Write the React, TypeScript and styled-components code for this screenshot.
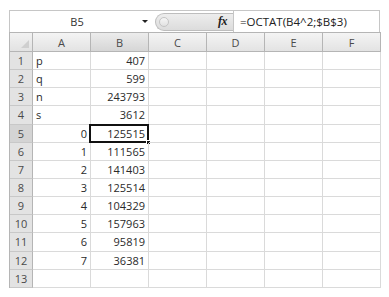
import React from "react";
import styled, { createGlobalStyle } from "styled-components";

//== Styling ==//
const GlobalStyle = createGlobalStyle`
  body {
    margin: 0;
    background: #ffffff;
    font-family: "Open Sans", "Liberation Sans", sans-serif;
  }
`;

const Sheet = styled.div`
  padding: 10px 0 0 9px;
  width: 371px;
`;

const FormulaBar = styled.div`
  display: flex;
  align-items: center;
  height: 22px;
  border-top: 1px solid #c6c6c6;
  border-left: 1px solid #c6c6c6;
  box-sizing: border-box;
`;

const NameBox = styled.div`
  display: flex;
  align-items: center;
  width: 143px;
  height: 100%;
  background: #fff;
  color: #333;
  font-size: 11px;
`;

const NameText = styled.span`
  flex: 1;
  text-align: center;
  padding-left: 2px;
`;

const DropArrow = styled.span`
  width: 0;
  height: 0;
  margin-right: 5px;
  border-left: 3px solid transparent;
  border-right: 3px solid transparent;
  border-top: 3px solid #222;
`;

const ButtonPill = styled.div`
  display: flex;
  align-items: center;
  justify-content: space-between;
  margin-left: 2px;
  width: 78px;
  height: 18px;
  box-sizing: border-box;
  border: 1px solid #bdbdbd;
  border-right: none;
  border-radius: 9px 0 0 9px;
  background: linear-gradient(#ededed, #dcdcdc);
  padding: 0 6px 0 3px;
`;

const PillDot = styled.span`
  width: 10px;
  height: 10px;
  border-radius: 50%;
  border: 1px solid #c4c4c4;
  box-sizing: border-box;
  background: linear-gradient(#f6f6f6, #e2e2e2);
`;

const Fx = styled.span`
  font-family: "Liberation Serif", serif;
  font-style: italic;
  font-weight: bold;
  font-size: 12px;
  color: #222;
  letter-spacing: -0.5px;
`;

const FormulaInput = styled.div`
  flex: 1;
  height: 100%;
  display: flex;
  align-items: center;
  border-left: 1px solid #c6c6c6;
  border-right: 1px solid #c6c6c6;
  background: #fff;
  padding-left: 6px;
  font-size: 11.5px;
  color: #222;
`;

const Grid = styled.div`
  display: grid;
  grid-template-columns: 23px repeat(6, 58px);
  grid-template-rows: 20px;
  grid-auto-rows: 18.15px;
  border-left: 1px solid #b5b5b5;
  box-sizing: border-box;
`;

const Corner = styled.div`
  position: relative;
  background: linear-gradient(#f2f2f2, #e2e2e2);
  border-right: 1px solid #b5b5b5;
  border-bottom: 1px solid #b5b5b5;
  border-top: 1px solid #b5b5b5;

  &::after {
    content: "";
    position: absolute;
    right: 3px;
    bottom: 3px;
    width: 0;
    height: 0;
    border-left: 8px solid transparent;
    border-bottom: 8px solid #cfcfcf;
  }
`;

const ColHeader = styled.div<{ $active?: boolean }>`
  display: flex;
  align-items: center;
  justify-content: center;
  font-size: 11px;
  color: #4a4a4a;
  background: ${(p) =>
    p.$active
      ? "linear-gradient(#ececec, #d6d6d6)"
      : "linear-gradient(#f4f4f4, #e3e3e3)"};
  border-top: 1px solid #b5b5b5;
  border-right: 1px solid #b5b5b5;
  border-bottom: 1px solid #b5b5b5;
`;

const RowHeader = styled.div<{ $active?: boolean }>`
  display: flex;
  align-items: center;
  justify-content: center;
  font-size: 11px;
  color: #4a4a4a;
  background: ${(p) => (p.$active ? "#d4d4d4" : "#e3e3e3")};
  border-right: 1px solid #b5b5b5;
  border-bottom: 1px solid #c8c8c8;
`;

const Cell = styled.div<{ $num?: boolean; $selected?: boolean }>`
  position: relative;
  display: flex;
  align-items: center;
  justify-content: ${(p) => (p.$num ? "flex-end" : "flex-start")};
  padding: 0 3px;
  font-size: 11px;
  color: #2a2a2a;
  border-right: 1px solid #dadada;
  border-bottom: 1px solid #dadada;
  white-space: nowrap;

  ${(p) =>
    p.$selected &&
    `
    &::before {
      content: "";
      position: absolute;
      left: -2px;
      top: -1px;
      right: -1px;
      bottom: -1px;
      border: 2px solid #111;
    }
    &::after {
      content: "";
      position: absolute;
      right: -3px;
      bottom: -3px;
      width: 5px;
      height: 5px;
      background: #111;
      border: 1px solid #fff;
      box-sizing: border-box;
    }
  `}
`;

//== Data ==//
const columns = ["A", "B", "C", "D", "E", "F"];

const rows: [string, string][] = [
  ["p", "407"],
  ["q", "599"],
  ["n", "243793"],
  ["s", "3612"],
  ["0", "125515"],
  ["1", "111565"],
  ["2", "141403"],
  ["3", "125514"],
  ["4", "104329"],
  ["5", "157963"],
  ["6", "95819"],
  ["7", "36381"],
  ["", ""],
];

const isNum = (v: string) => /^\d+$/.test(v);

//== Component ==//
const App: React.FC = () => {
  return (
    <>
      <GlobalStyle />
      <Sheet>
        <FormulaBar>
          <NameBox>
            <NameText>B5</NameText>
            <DropArrow />
          </NameBox>
          <ButtonPill>
            <PillDot />
            <Fx>fx</Fx>
          </ButtonPill>
          <FormulaInput>=OCTAT(B4^2;$B$3)</FormulaInput>
        </FormulaBar>
        <Grid>
          <Corner />
          {columns.map((c) => (
            <ColHeader key={c} $active={c === "B"}>
              {c}
            </ColHeader>
          ))}
          {rows.map(([a, b], i) => (
            <React.Fragment key={i}>
              <RowHeader $active={i === 4}>{i + 1}</RowHeader>
              <Cell $num={isNum(a)}>{a}</Cell>
              <Cell $num={isNum(b)} $selected={i === 4}>
                {b}
              </Cell>
              <Cell />
              <Cell />
              <Cell />
              <Cell />
            </React.Fragment>
          ))}
        </Grid>
      </Sheet>
    </>
  );
};

export default App;
